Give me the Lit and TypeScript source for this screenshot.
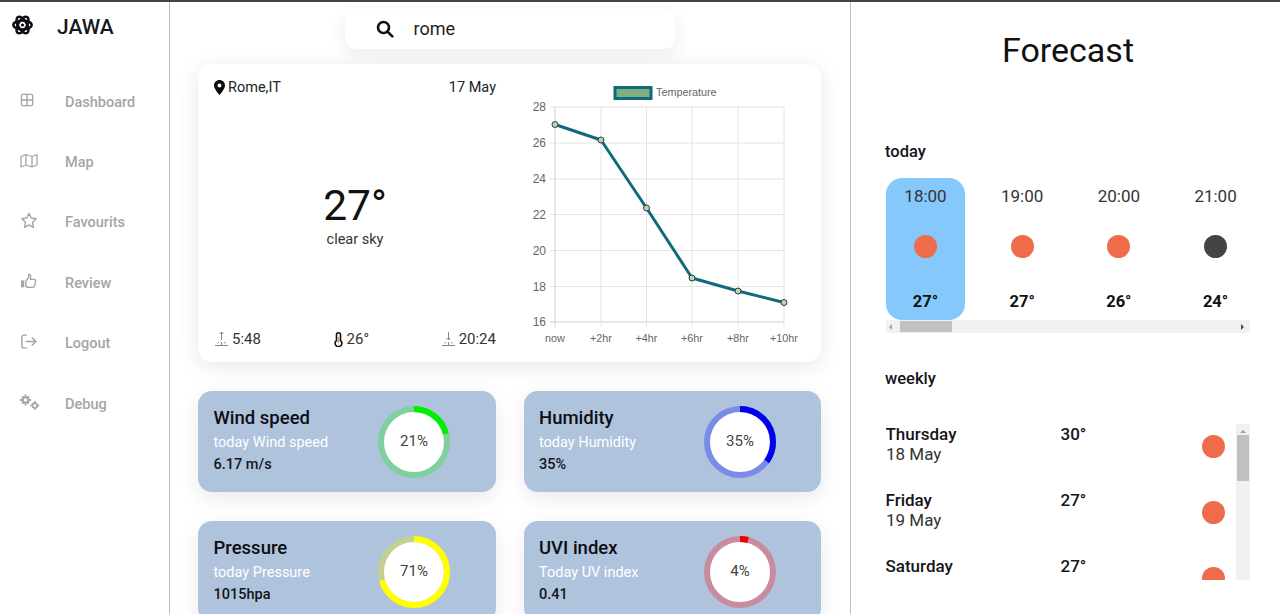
import { LitElement, css, html, svg } from 'lit';
import { customElement } from 'lit/decorators.js';

const navIcons = {
  grid: html`<svg class="nav-icon" viewBox="0 0 16 16" fill="none" stroke="currentColor" stroke-width="1.5"><rect x="1.5" y="1.5" width="12" height="12" rx="1.5"/><path d="M7.5 1.5v12M1.5 7.5h12"/></svg>`,
  map: html`<svg class="nav-icon wide" viewBox="0 0 18 16" fill="none" stroke="currentColor" stroke-width="1.3" stroke-linejoin="round"><path d="M1 4l5-2 6 2 5-2v10.5l-5 2-6-2-5 2zM6 2v10.5M12 4v10.5"/></svg>`,
  star: html`<svg class="nav-icon wide" viewBox="0 0 16 16" fill="none" stroke="currentColor" stroke-width="1.3" stroke-linejoin="round"><path d="M8 1.3l2.1 4.4 4.7.6-3.5 3.3.9 4.8L8 12.1l-4.2 2.3.9-4.8L1.2 6.300l4.700-.6z"/></svg>`,
  thumb: html`<svg class="nav-icon wide" viewBox="0 0 16 16" fill="none" stroke="currentColor" stroke-width="1.3" stroke-linejoin="round"><rect x="0.500" y="7" width="3" height="6.500" fill="currentColor" stroke="none"/><path d="M5 7.500l2.600-3.200V1.500c1.300-.3 2 .7 2 1.900L9.300 6h3.600c1.100 0 1.500.8 1.300 1.700l-1 4.300c-.2.900-.9 1.500-1.800 1.500H7.500C6 13.500 5 12.600 5 11.500z"/></svg>`,
  logout: html`<svg class="nav-icon wide" viewBox="0 0 16 16" fill="none" stroke="currentColor" stroke-width="1.400" stroke-linecap="round" stroke-linejoin="round"><path d="M5.500 2H3.200C2 2 1.300 2.800 1.300 4v8c0 1.200.7 2 1.900 2h2.300M5.500 8h9M11 4.500L14.500 8 11 11.500"/></svg>`,
  gears: html`<svg class="nav-icon wider" viewBox="0 0 20 16" fill="currentColor"><circle cx="5.500" cy="5.500" r="2.800" fill="none" stroke="currentColor" stroke-width="2"/><path d="M4.500 0h2v2h-2zM4.500 9h2v2h-2zM0 4.500h2v2H0zM9 4.500h2v2H9zM1.300 2.700l1.400-1.400 1.200 1.200-1.400 1.400zM7.100 8.500l1.400-1.400 1.200 1.200-1.400 1.400zM1.300 8.300l1.200-1.200 1.400 1.400-1.200 1.200zM7.100 2.500l1.200-1.200 1.400 1.400-1.200 1.200z"/><circle cx="14.800" cy="11" r="2.400" fill="none" stroke="currentColor" stroke-width="1.800"/><path d="M14 6.500h1.600v2H14zM14 13.500h1.600v2H14zM10.300 10.200h2v1.600h-2zM17.300 10.200h2v1.600h-2z"/></svg>`,
};

const navItems = [
  { label: 'Dashboard', icon: navIcons.grid },
  { label: 'Map', icon: navIcons.map },
  { label: 'Favourits', icon: navIcons.star },
  { label: 'Review', icon: navIcons.thumb },
  { label: 'Logout', icon: navIcons.logout },
  { label: 'Debug', icon: navIcons.gears },
];

const gauges = [
  { title: 'Wind speed', sub: 'today Wind speed', value: '6.17 m/s', pct: 21, track: '#7fd09c', bar: '#00ee00' },
  { title: 'Humidity', sub: 'today Humidity', value: '35%', pct: 35, track: '#7b8ce6', bar: '#0000ee' },
  { title: 'Pressure', sub: 'today Pressure', value: '1015hpa', pct: 71, track: '#c4cf93', bar: '#ffff00' },
  { title: 'UVI index', sub: 'Today UV index', value: '0.41', pct: 4, track: '#c98b9f', bar: '#ee0000' },
];

const hours = [
  { time: '18:00', temp: '27°', dot: '#ee6c4a', active: true },
  { time: '19:00', temp: '27°', dot: '#ee6c4a' },
  { time: '20:00', temp: '26°', dot: '#ee6c4a' },
  { time: '21:00', temp: '24°', dot: '#444444' },
];

// the third row is cut by the list's bottom edge, its date is never visible
const days = [
  { day: 'Thursday', date: '18 May', temp: '30°' },
  { day: 'Friday', date: '19 May', temp: '27°' },
  { day: 'Saturday', date: '', temp: '27°' },
];

// chart in page coordinates, the svg viewBox starts at 510,70
const xs = [555, 601, 646.500, 692, 738, 784];
const xLabels = ['now', '+2hr', '+4hr', '+6hr', '+8hr', '+10hr'];
const ys = [107, 143, 179, 214.500, 250.500, 286.500, 322];
const yLabels = ['28', '26', '24', '22', '20', '18', '16'];
const points = [124.500, 140, 208, 278, 291, 302.500];

@customElement('app-root')
export class AppRoot extends LitElement {
  static styles = css`
    :host {
      display: grid;
      grid-template-columns: 170px 681px 429px;
      height: 612px;
      overflow: hidden;
      border-top: 2px solid #444;
      background: #fff;
      font-family: Roboto, "Liberation Sans", sans-serif;
      color: #111;
    }

    .sidebar {
      border-right: 1px solid #bdbdbd;
      padding: 11px 0 0 12px;
    }
    .brand {
      display: flex;
      align-items: center;
      gap: 24px;
      height: 28px;
      margin-bottom: 31px;
      font-size: 21px;
      font-weight: 500;
      color: #16181f;
    }
    .brand svg { width: 21px; height: 22px; margin-top: -4px; }
    .nav-item {
      display: flex;
      align-items: center;
      height: 60.400px;
      padding-left: 8px;
      font-size: 14.500px;
      font-weight: 500;
      color: #a5a5a5;
    }
    .nav-item .slot { width: 45px; display: flex; margin-top: -4px; }
    .nav-icon { width: 15px; height: 15px; }
    .nav-icon.wide { width: 18px; height: 17px; }
    .nav-icon.wider { width: 20px; height: 17px; }

    .main {
      border-right: 1px solid #bdbdbd;
      padding: 0 29px 0 28px;
    }
    .search {
      display: flex;
      align-items: center;
      gap: 20px;
      width: 330px;
      height: 40px;
      box-sizing: border-box;
      margin: 7px auto 15px;
      padding-left: 31px;
      border-radius: 10px;
      background: #fff;
      box-shadow: 0 6px 18px rgba(40, 50, 80, 0.09);
      font-size: 18px;
      color: #222;
    }
    .search svg { width: 18px; height: 18px; }
    .search span { margin-top: -2px; }

    .today-card {
      display: grid;
      grid-template-columns: 282px 1fr;
      gap: 14px;
      height: 298px;
      box-sizing: border-box;
      padding: 6px 0 0 16px;
      border-radius: 14px;
      background: #fff;
      box-shadow: 0 4px 22px rgba(0, 0, 0, 0.1);
    }
    .today-info {
      display: flex;
      flex-direction: column;
      justify-content: space-between;
      height: 278px;
      padding-top: 8px;
      box-sizing: border-box;
      font-size: 14.500px;
      color: #222;
    }
    .row {
      display: flex;
      justify-content: space-between;
      align-items: center;
      height: 18px;
    }
    .with-icon { display: flex; align-items: center; gap: 3px; }
    .with-icon svg { width: 11px; height: 15px; }
    .with-icon svg.sun { width: 15px; height: 16px; }
    .current {
      display: flex;
      flex-direction: column;
      align-items: center;
      margin-top: 3px;
    }
    .current .temp { font-size: 42.500px; line-height: 50px; color: #111; }
    .current .desc { font-size: 14.500px; line-height: 18px; color: #333; }
    .bottom { font-size: 15px; color: #333; }
    .chart { width: 310px; height: 290px; display: block; }
    .chart text { font-family: "Liberation Sans", Arial, sans-serif; fill: #666; }

    .gauges {
      display: grid;
      grid-template-columns: 1fr 1fr;
      gap: 29px 28px;
      margin-top: 29px;
    }
    .gauge {
      display: flex;
      align-items: center;
      height: 101px;
      box-sizing: border-box;
      padding-left: 15.500px;
      border-radius: 14px;
      background: #afc3dd;
      box-shadow: 0 6px 20px rgba(0, 0, 0, 0.09);
    }
    .gauge-text { width: 164.500px; margin-top: -2px; }
    .gauge-title { font-size: 18.500px; line-height: 24px; font-weight: 500; color: #0d0d12; }
    .gauge-sub { font-size: 14.500px; line-height: 22px; margin-top: 2px; color: #fff; }
    .gauge-value { font-size: 14.500px; line-height: 22px; font-weight: 500; color: #15151a; }
    .ring { width: 72px; height: 72px; display: block; }
    .ring text {
      font-family: Roboto, "Liberation Sans", sans-serif;
      font-size: 15px;
      fill: #444;
      text-anchor: middle;
      dominant-baseline: central;
    }

    .forecast { padding: 28px 30px 0 35px; }
    h1 {
      margin: 0;
      font-size: 34px;
      font-weight: 400;
      line-height: 40px;
      text-align: center;
      color: #111;
    }
    h2 {
      margin: 0;
      margin-left: -1px;
      font-size: 16.500px;
      font-weight: 500;
      line-height: 20px;
      color: #15151a;
    }
    .h-today { margin-top: 72px; }
    .hourly {
      display: flex;
      gap: 17.700px;
      width: 364px;
      height: 142px;
      margin-top: 16px;
      overflow: hidden;
    }
    .hour {
      flex: 0 0 79px;
      display: flex;
      flex-direction: column;
      align-items: center;
      padding-top: 8px;
      box-sizing: border-box;
      border-radius: 16px;
      font-size: 17px;
      line-height: 20px;
      color: #333;
    }
    .hour.active { background: #85c8fb; }
    .dot { width: 23px; height: 23px; border-radius: 50%; flex: none; }
    .hour .dot { margin-top: 29px; }
    .hour .temp { margin-top: 34px; font-weight: 700; font-size: 16.500px; color: #111; }

    .hbar {
      display: flex;
      align-items: center;
      justify-content: space-between;
      height: 13px;
      width: 364px;
      padding: 0 6px 0 3px;
      box-sizing: border-box;
      background: #f1f1f1;
    }
    .hbar .thumb { width: 52px; height: 11px; background: #c1c1c1; margin: 0 auto 0 8px; }
    .arrow { width: 0; height: 0; border: 3px solid transparent; }
    .arrow.left { border-right-color: #a3a3a3; border-left-width: 0; }
    .arrow.right { border-left-color: #505050; border-right-width: 0; }

    .h-weekly { margin-top: 36px; }
    .weekly {
      display: grid;
      grid-template-columns: 1fr 14px;
      height: 156px;
      margin-top: 35px;
      overflow: hidden;
    }
    .day {
      display: grid;
      grid-template-columns: 175px 140.500px 23px;
      height: 66px;
      align-items: start;
    }
    .day-name, .day-temp { font-size: 17px; line-height: 21px; font-weight: 500; color: #15151a; margin-left: -0.500px; }
    .day-date { font-size: 17px; line-height: 19px; color: #333; }
    .day .dot { margin-top: 10.500px; }
    .vbar {
      display: flex;
      flex-direction: column;
      align-items: center;
      padding: 6px 0;
      box-sizing: border-box;
      background: #f1f1f1;
    }
    .vbar .thumb { width: 12px; height: 46px; margin: 2px 0 auto; background: #c1c1c1; }
    .arrow.up { border-bottom-color: #a3a3a3; border-top-width: 0; }
    .arrow.down { border-top-color: #505050; border-bottom-width: 0; }
  `;

  renderGauge(g: typeof gauges[number]) {
    return html`
      <div class="gauge">
        <div class="gauge-text">
          <div class="gauge-title">${g.title}</div>
          <div class="gauge-sub">${g.sub}</div>
          <div class="gauge-value">${g.value}</div>
        </div>
        <svg class="ring" viewBox="0 0 72 72">
          <circle cx="36" cy="36" r="33" fill="#fff" stroke=${g.track} stroke-width="6"/>
          <circle cx="36" cy="36" r="33" fill="none" stroke=${g.bar} stroke-width="6"
            pathLength="100" stroke-dasharray="${g.pct} 100" transform="rotate(-90 36 36)"/>
          <text x="36" y="35">${g.pct}%</text>
        </svg>
      </div>
    `;
  }

  renderChart() {
    return html`
      <svg class="chart" viewBox="510 70 310 290">
        <rect x="615" y="87.500" width="36" height="11" fill="#7fae80" stroke="#0f6a7c" stroke-width="3"/>
        <text x="656" y="96" font-size="10.800">Temperature</text>
        ${ys.map((y, i) => svg`
          <path d="M550 ${y}H784" stroke=${i === 6 ? '#cfcfcf' : '#e4e4e4'} fill="none"/>
          <text x="546" y=${y + 4} font-size="12" text-anchor="end">${yLabels[i]}</text>
        `)}
        ${xs.map((x, i) => svg`
          <path d="M${x} 107V327" stroke=${i === 0 ? '#cfcfcf' : '#e4e4e4'} fill="none"/>
          <text x=${x} y="342" font-size="10.800" text-anchor="middle">${xLabels[i]}</text>
        `)}
        <polyline fill="none" stroke="#0f6a7c" stroke-width="3" stroke-linejoin="round"
          points=${xs.map((x, i) => `${x},${points[i]}`).join(' ')}/>
        ${xs.map((x, i) => svg`
          <circle cx=${x} cy=${points[i]} r="3" fill="#b9d3b4" stroke="#2f3f3f"/>
        `)}
      </svg>
    `;
  }

  render() {
    return html`
      <nav class="sidebar">
        <div class="brand">
          <svg viewBox="0 0 24 24" fill="none" stroke="#0c0c14" stroke-width="2.800">
            <ellipse cx="12" cy="12" rx="10.500" ry="5"/>
            <ellipse cx="12" cy="12" rx="10.500" ry="5" transform="rotate(60 12 12)"/>
            <ellipse cx="12" cy="12" rx="10.500" ry="5" transform="rotate(120 12 12)"/>
            <circle cx="12" cy="12" r="1.800" fill="#0c0c14" stroke="none"/>
          </svg>
          <span>JAWA</span>
        </div>
        ${navItems.map((n) => html`
          <div class="nav-item"><span class="slot">${n.icon}</span>${n.label}</div>
        `)}
      </nav>

      <main class="main">
        <div class="search">
          <svg viewBox="0 0 18 18" fill="none" stroke="#111" stroke-width="2.600" stroke-linecap="round">
            <circle cx="7.500" cy="7.500" r="5.500"/><path d="M11.800 11.800L16.300 16.300"/>
          </svg>
          <span>rome</span>
        </div>

        <section class="today-card">
          <div class="today-info">
            <div class="row">
              <span class="with-icon">
                <svg viewBox="0 0 11 15"><path fill-rule="evenodd" fill="#0b0b0b" d="M5.500 0C2.500 0 0 2.400 0 5.400 0 9 5.500 15 5.500 15S11 9 11 5.400C11 2.400 8.500 0 5.500 0zm0 7.400a2 2 0 110-4 2 2 0 010 4z"/></svg>
                Rome,IT
              </span>
              <span>17 May</span>
            </div>
            <div class="current">
              <span class="temp">27°</span>
              <span class="desc">clear sky</span>
            </div>
            <div class="row bottom">
              <span class="with-icon">
                <svg class="sun" viewBox="0 0 15 16" fill="none" stroke="#777" stroke-width="0.900"><path d="M7.500 1v8M5.500 3l2-2 2 2M1 14.500h13M3.500 12.500l1.500-1.500M11.500 12.500L10 11M7.500 14v-3"/></svg>
                5:48
              </span>
              <span class="with-icon">
                <svg viewBox="0 0 11 15" fill="none" stroke="#111" stroke-width="1.600"><path d="M3.500 8.500V2.800a2 2 0 014 0v5.700a3.400 3.400 0 11-4 0z"/><path d="M5.500 5v6" stroke="#c96"/></svg>
                26°
              </span>
              <span class="with-icon">
                <svg class="sun" viewBox="0 0 15 16" fill="none" stroke="#777" stroke-width="0.900"><path d="M7.500 1v8M5.500 7l2 2 2-2M1 14.500h13M3.500 12.500l1.500-1.500M11.500 12.500L10 11M7.500 14v-3"/></svg>
                20:24
              </span>
            </div>
          </div>
          ${this.renderChart()}
        </section>

        <section class="gauges">
          ${gauges.map((g) => this.renderGauge(g))}
        </section>
      </main>

      <aside class="forecast">
        <h1>Forecast</h1>
        <h2 class="h-today">today</h2>
        <div class="hourly">
          ${hours.map((h) => html`
            <div class="hour ${h.active ? 'active' : ''}">
              <span>${h.time}</span>
              <span class="dot" style="background:${h.dot}"></span>
              <span class="temp">${h.temp}</span>
            </div>
          `)}
        </div>
        <div class="hbar">
          <span class="arrow left"></span>
          <span class="thumb"></span>
          <span class="arrow right"></span>
        </div>
        <h2 class="h-weekly">weekly</h2>
        <div class="weekly">
          <div>
            ${days.map((d) => html`
              <div class="day">
                <div>
                  <div class="day-name">${d.day}</div>
                  <div class="day-date">${d.date}</div>
                </div>
                <div class="day-temp">${d.temp}</div>
                <span class="dot" style="background:#ee6c4a"></span>
              </div>
            `)}
          </div>
          <div class="vbar">
            <span class="arrow up"></span>
            <span class="thumb"></span>
            <span class="arrow down"></span>
          </div>
        </div>
      </aside>
    `;
  }
}
